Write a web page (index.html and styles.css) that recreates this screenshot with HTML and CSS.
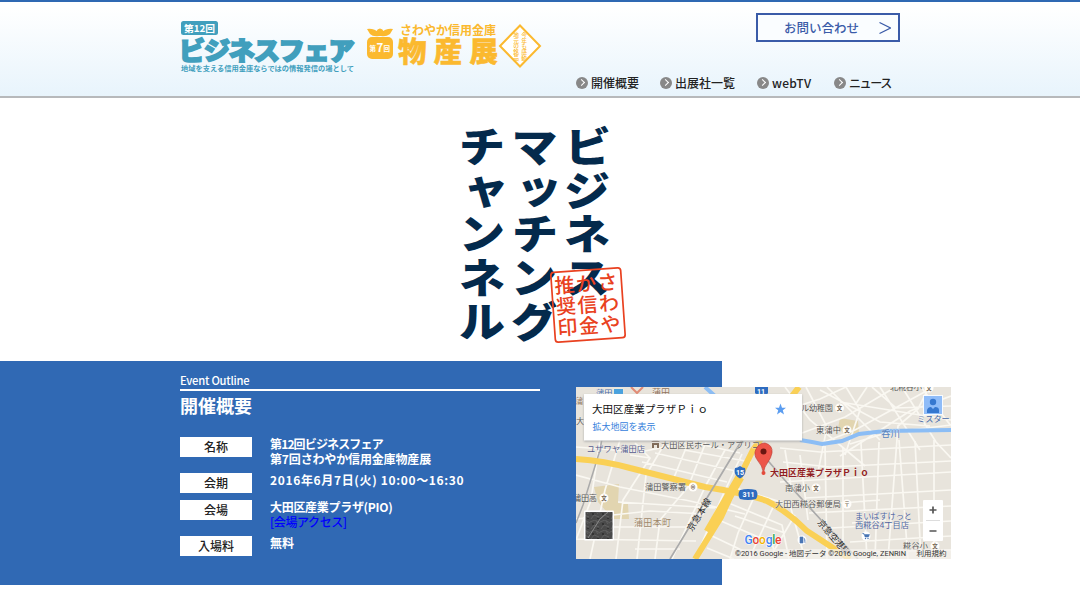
FILE: index.html
```html
<!DOCTYPE html>
<html lang="ja">
<head>
<meta charset="utf-8">
<title>ビジネスマッチングチャンネル</title>
<link rel="stylesheet" href="styles.css">
</head>
<body>
<header class="site-header">
  <div class="container header-inner">
    <div class="logos">
      <svg class="logo-fair" width="176" height="54" viewBox="180 20 176 54">
        <rect x="181" y="21" width="37" height="14" rx="2.5" fill="#419fbd"/>
        <text x="184" y="31.5" font-size="9.5" font-weight="700" fill="#fff" textLength="31" lengthAdjust="spacingAndGlyphs">第12回</text>
        <text class="fair-name" transform="translate(179 60) scale(.9 .86)" font-size="29" textLength="195" lengthAdjust="spacing">ビジネスフェア</text>
        <text x="181" y="71" font-size="7" font-weight="700" fill="#419fbd" textLength="173" lengthAdjust="spacingAndGlyphs">地域を支える信用金庫ならではの情報発信の場として</text>
      </svg>
      <svg class="logo-bussan" width="178" height="48" viewBox="365 22 178 48">
        <g fill="#fbb92f">
          <rect x="367" y="37" width="26" height="22" rx="5"/>
          <path d="M379 36Q373 37 370 34L367 29Q374 28 379 33Q379 29 380 28Q381 30 381 33Q386 28 393 29L390 34Q386 37 381 36Z"/>
          <circle cx="380" cy="32" r="3.2"/>
          <text x="400" y="35" font-size="12" font-weight="700" textLength="96" lengthAdjust="spacingAndGlyphs">さわやか信用金庫</text>
          <text x="398" y="61.5" font-size="28.5" font-weight="900" stroke="#fbb92f" stroke-width=".5" textLength="100">物産展</text>
        </g>
        <g fill="#fff" font-weight="700"><text x="369.500" y="50.500" font-size="6.500">第</text><text x="376.500" y="51.500" font-size="11.500">7</text><text x="383.500" y="50.500" font-size="6.500">回</text></g>
        <path d="M520 25.5 540 46 520 66.500 500 46Z" fill="#fff" stroke="#fbb92f" stroke-width="2"/>
        <g class="diamond-text"><text x="524" y="32">今年も感動</text><text x="516" y="32">地元の銘品</text></g>
      </svg>
    </div>
    <div class="header-right">
      <a class="contact"><span>お問い合わせ</span><svg width="12" height="12" viewBox="0 0 12 12"><path d="M.5.5 11.500 6 .5 11.500" fill="none" stroke="#3a5ba8" stroke-width="1.200"/></svg></a>
      <nav class="nav">
        <a class="nav-about"><i class="dot"></i>開催概要</a><a class="nav-list"><i class="dot"></i>出展社一覧</a><a class="nav-tv"><i class="dot"></i>webTV</a><a class="nav-news"><i class="dot"></i>ニュース</a>
      </nav>
    </div>
  </div>
</header>

<main>
  <section class="hero">
    <svg width="180" height="230" viewBox="450 121 180 230">
      <g class="hero-title" transform="scale(1 .9)">
        <text x="588 587 587 587" y="180.500 229 277 326">ビジネス</text>
        <text x="534.500 539 535 534 534" y="180.500 226 277 326 374.500">マッチング</text>
        <text x="482 486 482 482 482" y="180.500 226 277 326 374.500">チャンネル</text>
      </g>
      <g transform="rotate(-4 588 305)">
        <rect x="553" y="270" width="70" height="70" rx="3" fill="none" stroke="#e94120" stroke-width="1.700"/>
        <g class="seal-text">
          <text x="609 609 609" y="291 312 333">さわや</text>
          <text x="587.500 587.500 587.500" y="291 312 333">か信金</text>
          <text x="566 566 566" y="291 312 333">推奨印</text>
        </g>
      </g>
    </svg>
  </section>

  <section class="outline">
    <div class="outline-content">
      <div class="details">
        <p class="eyebrow">Event Outline</p>
        <h1>開催概要</h1>
        <dl>
          <dt>名称</dt><dd class="two"><span class="fair-line">第12回ビジネスフェア</span><br><span class="bussan-line">第7回さわやか信用金庫物産展</span></dd>
          <dt>会期</dt><dd class="date">2016年6月7日(火) 10:00〜16:30</dd>
          <dt>会場</dt><dd class="two place"><span>大田区産業プラザ(PIO)</span><br><a>[会場アクセス]</a></dd>
          <dt>入場料</dt><dd>無料</dd>
        </dl>
      </div>
      <svg class="map" width="375" height="172" viewBox="576 387 375 172">
        <defs>
          <pattern id="terrain" width="10" height="10" patternUnits="userSpaceOnUse"><rect width="10" height="10" fill="#4a4a4a"/><path d="M0 2 5 0 10 3M1 9 4 5 9 7M6 1 8 4" stroke="#606060" stroke-width="1" fill="none"/><path d="M2 3h2v2h-2zM7 8h2v1h-2z" fill="#333"/></pattern>
        </defs>
        <rect x="576" y="387" width="375" height="172" fill="#e8e4dc"/>
        <path d="M594 487 619 484 618 503 628 504 629 519 613 519 598 502ZM840 418 858 421 859 433 846 435 838 428Z" fill="#e2d5b0"/>
        <g class="streets">
          <path d="M576 447 640 452 690 442 740 453M600 440 591 500 576 540M620 440 605 490 590 559M635 443 650 458 623 500 616 559M665 443 646 475 637 559M688 443 673 480M706 442 688 487 660 520 655 559M725 450 705 487 672 559M742 454 722 497 695 559M576 475 620 487 690 501 745 514M576 519 650 511 704 514M576 539 696 541M600 527 690 527M635 549 680 549M618 502 715 508M650 458 630 455M642 462 727 482M655 453 740 472M684 450 751 462"/>
          <path d="M736 488 790 505 805 559M731 504 782 525 789 559M721 521 772 543 776 559M710 535 754 556M707 548 734 559M755 495 738 533 730 559M775 503 749 559M795 515 772 554M735 516 785 533"/>
          <path d="M785 387 810 420 865 466M806 387 827 427 817 477M827 387 880 440M846 387 860 410 845 455M867 387 855 405M880 387 920 450M902 387 936 442 951 458M921 387 951 426M785 410 820 399 846 387M802 433 845 417 894 388M819 444 855 430 930 389M840 456 910 411 951 396M850 444 886 433 951 425M820 390 880 422 930 426M840 402 951 420M872 387 896 408 951 406M929 387 918 409 898 426 888 559"/>
          <path d="M780 448 820 452 951 445M783 462 830 467 951 461M780 482 951 472M805 498 951 490M809 513 951 506M831 528 951 521M850 542 951 536M865 552 951 550M825 446 827 559M843 447 843 559M861 443 867 559M879 442 875 559M899 440 908 559M915 441 921 559M934 440 934 559M800 455 808 520M785 450 792 493M841 503 880 500M852 523 886 520"/>
        </g>
        <path d="M607 410 600 450 583 505 576 523" stroke="#aaa" stroke-width="1.500" fill="none"/>
        <path d="M631 387 637 393 643 387" stroke="#e18b75" stroke-width="2" fill="none"/>
        <path d="M705 387 715 396M800 440 812 442 822 444 842 441 859 434 885 431 951 430" stroke="#8bbdf5" stroke-width="4" fill="none"/>
        <g fill="none" stroke="#fad055"><path d="M576 459Q605 461 630 468L705 487Q745 493 767 501Q787 511 807 531L850 559" stroke-width="6"/><path d="M799 387 789 400 753 450 738 480 721 517 695 559" stroke-width="6"/><path d="M740 477 708 532" stroke-width="9"/></g>
        <path d="M742 440 716 483 670 559M763 455 789 485 822 521 858 559" stroke="#aaa" stroke-width="1.700" fill="none"/>
        <g class="map-labels" fill="#555">
          <g fill="#4668a7"><text x="596" y="396">蒲田</text><rect x="614" y="389" width="9" height="9" fill="#49a2df"/></g>
          <text x="652" y="396" fill="#91735c" font-size="9">蒲田</text><text x="575" y="404" fill="#91735c">蒲</text><text x="576" y="424">大</text>
          <text x="587" y="451.500" fill="#555b8d" textLength="58">ユザワヤ蒲田店</text><path d="M651 442 655.500 438.500 660 442ZM652 443h7v5h-2v-3h-3v3h-2z" fill="#806b58"/><text x="661" y="447.500" textLength="99">大田区民ホール・アプリコ</text>
          <text x="801" y="410.500" textLength="32">ル幼稚園</text><text x="816" y="432.500" textLength="25">東蒲中</text><text x="890" y="390" textLength="32">北糀谷小</text>
          <text x="881" y="437" font-size="9.500" fill="#5683be">呑川</text><text x="917" y="422" fill="#4668a7">ミスター</text>
          <text x="645" y="490" textLength="41">蒲田警察署</text><text x="573" y="501" textLength="24">蒲田高</text><text x="634" y="525.500" font-size="9" fill="#9e8769" textLength="37">蒲田本町</text>
          <text x="785" y="490.500" textLength="25">南蒲小</text><text x="775" y="506.500" textLength="66">大田西糀谷郵便局</text>
          <g fill="#4e65a0"><text x="855" y="519" textLength="57">まいばすけっと</text><text x="855" y="528" textLength="54">西糀谷4丁目店</text></g>
          <text x="903" y="549" textLength="25">糀谷小</text>
          <text transform="translate(692 532) rotate(-58)" font-size="9" textLength="37" fill="#222">京急本線</text><text transform="translate(817 523) rotate(49)" font-size="9" textLength="44" fill="#222">京急空港線</text>
          <text x="770" y="476" font-weight="700" fill="#921e23" font-size="9" textLength="99">大田区産業プラザＰｉｏ</text>
        </g>
        <g class="place-icons"><circle cx="839.500" cy="408" r="4.500"/><text x="839.500" y="410">文</text><circle cx="847" cy="430" r="4.500"/><text x="847" y="432">文</text><circle cx="929" cy="388" r="4.500"/><text x="929" y="390">文</text><circle cx="604" cy="498" r="4.500"/><text x="604" y="500">文</text><circle cx="816" cy="488" r="4.500"/><text x="816" y="490">文</text><circle cx="935" cy="546" r="4.500"/><text x="935" y="548">文</text><circle cx="693" cy="487" r="4.500"/><text x="693" y="489">⊗</text><circle cx="847" cy="504" r="4.500"/><text x="847" y="506">〒</text></g>
        <g><circle cx="802" cy="540" r="4.500" fill="#fff"/><path d="M800 537h3v6h-3zM804 538l1 2v3" fill="#4976b5" stroke="#4976b5" stroke-width=".6"/><circle cx="866" cy="536" r="4.500" fill="#fff"/><path d="M862.500 533.500h1.500l1 3.500h3.500l1-2.500h-5Z" fill="#4976b5" stroke="#4976b5" stroke-width=".5"/><circle cx="865.500" cy="538.500" r=".7" fill="#4976b5"/><circle cx="868" cy="538.500" r=".7" fill="#4976b5"/></g>
        <g fill="#2e6cc0"><path d="M755 386h13v7q-1 3-6 3t-7-3zM735 468q2.500 0 5-2 2.500 2 5 2 2 7-5 10.500-7-3.500-5-10.500zM740 490q8-2 16 0 3 4 0 9-8 2-16 0-3-5 0-9z"/></g>
        <g class="route"><text x="761" y="394">11</text><text x="740" y="475">15</text><text x="748.500" y="497">311</text></g>
        <g class="info-card"><rect x="584" y="394" width="218" height="46.500" fill="#fff"/><text x="592" y="412.500" font-size="10.500" fill="#111" textLength="116">大田区産業プラザＰｉｏ</text><text x="592.500" y="430" font-size="9" fill="#3581dc" textLength="63">拡大地図を表示</text><path d="M780.500 403.500 782 407.700 786 407.800 782.800 410.300 784 414.500 780.500 412 777 414.500 778.200 410.300 775 407.800 779 407.700Z" fill="#5b9df0"/></g>
        <path d="M763.500 473Q762 465 758 461Q753 455 756 449Q759 443 765 443Q773 445 772 453Q771 458 768 462Q764 467 763.500 473Z" fill="#ed5549" stroke="#b7352e" stroke-width=".6"/><circle cx="763.500" cy="451.500" r="3" fill="#691611"/><circle cx="763.500" cy="473" r="2" fill="#e34b3c"/>
        <rect x="923" y="395" width="20" height="20" fill="#f7fbff"/><rect x="924" y="396" width="18" height="18" fill="#8fbcf8"/><circle cx="933" cy="402" r="3.200" fill="#3577cf"/><path d="M927 413v-3q1-3 4-3l2 2 2-2q4 0 4 3v3Z" fill="#3577cf"/>
        <rect x="584" y="510.500" width="30" height="30" rx="1" fill="#fff"/><rect x="585.500" y="512" width="27" height="27" fill="url(#terrain)"/><path d="M588 538 600 519 608 512" stroke="#888" fill="none"/>
        <rect x="923" y="500" width="20" height="41" rx="1" fill="#fff"/><path d="M929.500 510h7M933 506.500v7M929.500 531h7" stroke="#555" stroke-width="1.700"/><path d="M926 520.500h14" stroke="#ddd"/>
        <rect x="732" y="549" width="219" height="10" fill="#f5f3ef" fill-opacity=".72"/>
        <text class="google" x="744.500" y="543.500" textLength="37"><tspan fill="#4285f4">G</tspan><tspan fill="#e94335">o</tspan><tspan fill="#f4b400">o</tspan><tspan fill="#4285f4">g</tspan><tspan fill="#34a853">l</tspan><tspan fill="#ea4335">e</tspan></text>
        <text class="copyright" x="735" y="556" textLength="171" lengthAdjust="spacingAndGlyphs">©2016 Google - 地図データ ©2016 Google, ZENRIN</text><text class="copyright" x="916.500" y="556" textLength="30" lengthAdjust="spacingAndGlyphs">利用規約</text>
      </svg>
    </div>
  </section>
</main>
</body>
</html>
```
FILE: styles.css
```css
* { box-sizing: border-box; }
body { margin: 0; background: #fff; color: #333; font-family: "Noto Sans CJK JP", sans-serif; font-size: 12px; overflow: hidden; }
svg { display: block; flex: none; }
.container { width: 720px; margin: 0 auto; }
.site-header { height: 98px; border-top: 2px solid #2f69b3; border-bottom: 2px solid #b7b9bb; background: linear-gradient(#fff 5%, #e8f4fc); }
.header-inner { display: flex; justify-content: space-between; height: 94px; }
.logos { display: flex; gap: 9px; padding-top: 18px; }
.logo-bussan { margin-top: 2px; }
.fair-name { font-weight: 900; fill: #419fbd; stroke: #419fbd; stroke-width: 2px; }
.diamond-text text { writing-mode: vertical-rl; font-size: 5.7px; font-weight: 500; fill: #fbb92f; }
.header-right { width: 324px; padding-top: 11px; display: flex; flex-direction: column; }
.contact { align-self: flex-end; width: 144px; height: 29px; border: 2px solid #3a5ba8; background: #fafdff; color: #3a5ba8; display: flex; align-items: center; gap: 20px; padding-left: 26px; font-size: 12.5px; font-weight: 500; white-space: nowrap; }
.contact span { width: 75px; }
.nav { display: flex; margin-top: 31.5px; line-height: 18px; font-weight: 500; color: #222; white-space: nowrap; }
.nav a { display: flex; align-items: center; gap: 3px; }
.nav-about { width: 84px; }
.nav-list { width: 97px; }
.nav-tv { width: 77px; letter-spacing: .3px; }
.nav-news { letter-spacing: -1.4px; }
.dot { width: 12px; height: 12px; border-radius: 50%; background: #888; display: grid; place-items: center; flex: none; }
.dot::after { content: ""; width: 4px; height: 4px; border: solid #fff; border-width: 1.5px 1.5px 0 0; transform: translateX(-1px) rotate(45deg); }
.hero { height: 263px; padding: 23px 0 0 450px; }
.hero-title { font-size: 46px; font-weight: 900; fill: #042a4c; text-anchor: middle; }
.seal-text { font-size: 20px; font-weight: 500; fill: #e94120; text-anchor: middle; }
.outline { width: 722px; height: 224px; background: #3069b4; padding: 26px 0 0 180px; }
.outline-content { display: flex; width: 771px; gap: 36px; }
.details { width: 360px; color: #fff; margin-top: -15px; flex: none; }
.eyebrow { margin: 0; height: 19px; line-height: 17px; font-size: 11.2px; letter-spacing: -.25px; font-weight: 500; border-bottom: 2px solid #fff; }
h1 { margin: 3px 0 21px; font-size: 18px; line-height: 22px; font-weight: 700; }
dl { margin: 0; display: grid; grid-template-columns: 72px 270px; column-gap: 18px; row-gap: 7px; }
dt { height: 20px; background: #fff; color: #222; text-align: center; line-height: 20px; font-weight: 500; }
dd { margin: 0; font-weight: 700; line-height: 14.5px; white-space: nowrap; }
dd a { color: #00f; font-weight: 500; letter-spacing: -.4px; }
.two { height: 29px; }
.fair-line { letter-spacing: -.85px; }
.bussan-line { letter-spacing: -.15px; }
.place span { letter-spacing: -.3px; }
.date { letter-spacing: .65px; }
.streets { fill: none; stroke: #faf8f2; stroke-width: 1.7px; }
.map-labels { font-size: 8.2px; paint-order: stroke; stroke: #f4f1eb; stroke-width: .5px; }
.place-icons circle { fill: #fffdf9; }
.place-icons text { fill: #756654; font-size: 5.5px; font-weight: 700; text-anchor: middle; }
.route { fill: #fff; font: 700 7px Roboto, sans-serif; text-anchor: middle; }
.info-card rect { filter: drop-shadow(0 1px 1px #aaa); }
.google { font: 500 12px Roboto, sans-serif; paint-order: stroke; stroke: #fff; stroke-width: 1px; }
.copyright { font-family: Roboto, "Noto Sans CJK JP", sans-serif; font-size: 7.3px; fill: #333; }
```
